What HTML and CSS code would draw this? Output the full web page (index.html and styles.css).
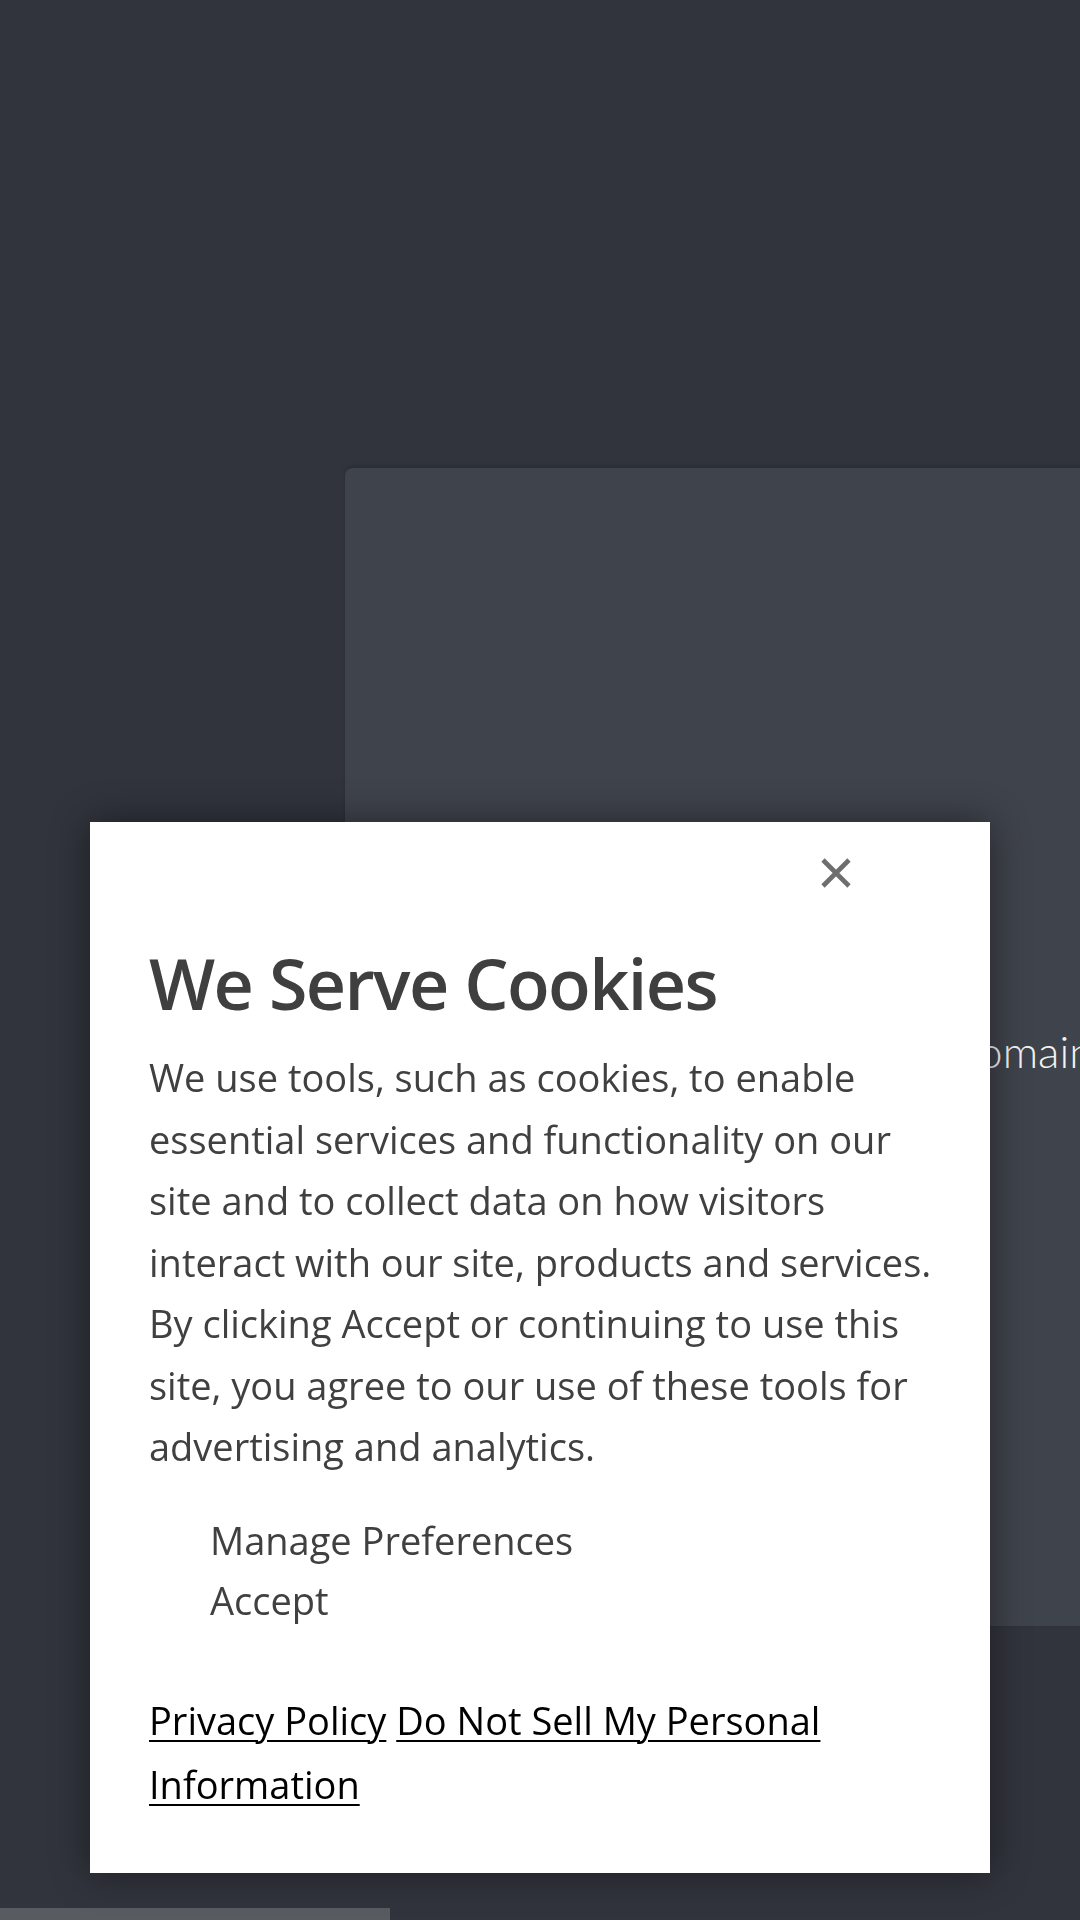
FILE: index.html
```html
<!DOCTYPE html>
<html lang="en">
<head>
<meta charset="utf-8">
<title>We Serve Cookies</title>
<link rel="stylesheet" href="styles.css">
</head>
<body>
<main class="page">
  <section class="hero-card">
    <p class="hero-text">Domain Name Search</p>
  </section>
  <div class="bottom-bar"></div>
</main>

<div class="cookie-modal" role="dialog" aria-labelledby="cookie-title">
  <div class="close-row">
    <button class="close-btn" aria-label="Close">
      <svg width="30" height="30" viewBox="0 0 30 30">
        <path d="M2 2 L28 28 M28 2 L2 28" stroke="#6e6e6e" stroke-width="4.6" stroke-linecap="butt" fill="none"/>
      </svg>
    </button>
  </div>
  <h2 id="cookie-title" class="cookie-title">We Serve Cookies</h2>
  <p class="cookie-text">We use tools, such as cookies, to enable essential services and functionality on our site and to collect data on how visitors interact with our site, products and services. By clicking Accept or continuing to use this site, you agree to our use of these tools for advertising and analytics.</p>
  <div class="cookie-actions">
    <button class="text-btn">Manage Preferences</button>
    <button class="text-btn">Accept</button>
  </div>
  <p class="cookie-links"><a href="#">Privacy Policy</a> <a href="#">Do Not Sell My Personal Information</a></p>
</div>
</body>
</html>
```

FILE: styles.css
```css
html, body {
  margin: 0;
  padding: 0;
}

body {
  width: 1080px;
  height: 1920px;
  overflow: hidden;
  background: #31343c;
  font-family: "Open Sans", "Noto Sans", sans-serif;
}

.page {
  display: flex;
  flex-direction: column;
  padding-top: 468px;
}

.hero-card {
  margin-left: 345px;
  width: 900px;
  height: 1158px;
  background: #3f434b;
  border-radius: 8px 0 0 8px;
  box-shadow: 0 -2px 4px rgba(0, 0, 0, 0.15);
  box-sizing: border-box;
  padding-top: 553px;
  padding-left: 600px;
}

.hero-text {
  margin: 0;
  white-space: nowrap;
  color: #f2f2f2;
  font-family: "Lato", sans-serif;
  font-weight: 300;
  font-size: 44px;
  line-height: 60px;
}

.bottom-bar {
  margin-top: 282px;
  width: 390px;
  height: 40px;
  background: #585b5f;
}

.cookie-modal {
  position: fixed;
  left: 90px;
  top: 822px;
  width: 900px;
  height: 1051px;
  box-sizing: border-box;
  background: #ffffff;
  padding: 36px 50px 0 59px;
  box-shadow: 0 0 36px rgba(0, 0, 0, 0.45);
  color: #404040;
}

.close-row {
  display: flex;
  justify-content: flex-end;
  padding-right: 89px;
}

.close-btn {
  display: block;
  border: 0;
  padding: 0;
  margin: 0;
  background: none;
  width: 30px;
  height: 30px;
}

.close-btn svg {
  display: block;
}

.cookie-title {
  margin: 53px 0 0;
  font-size: 70px;
  font-weight: 600;
  line-height: 84px;
  letter-spacing: -1.6px;
  color: #3f3f3f;
}

.cookie-text {
  margin: 22px 0 0;
  font-size: 38px;
  line-height: 61.5px;
}

.cookie-actions {
  display: flex;
  flex-direction: column;
  align-items: flex-start;
  margin-top: 32px;
  padding-left: 61px;
}

.text-btn {
  border: 0;
  background: none;
  padding: 0;
  margin: 0;
  font-family: inherit;
  font-size: 38px;
  line-height: 60px;
  color: #404040;
}

.cookie-links {
  margin: 58px 0 0;
  font-size: 38px;
  line-height: 64px;
}

.cookie-links a {
  color: #000000;
  text-decoration: underline;
  text-decoration-thickness: 2px;
  text-underline-offset: 5px;
}
```
